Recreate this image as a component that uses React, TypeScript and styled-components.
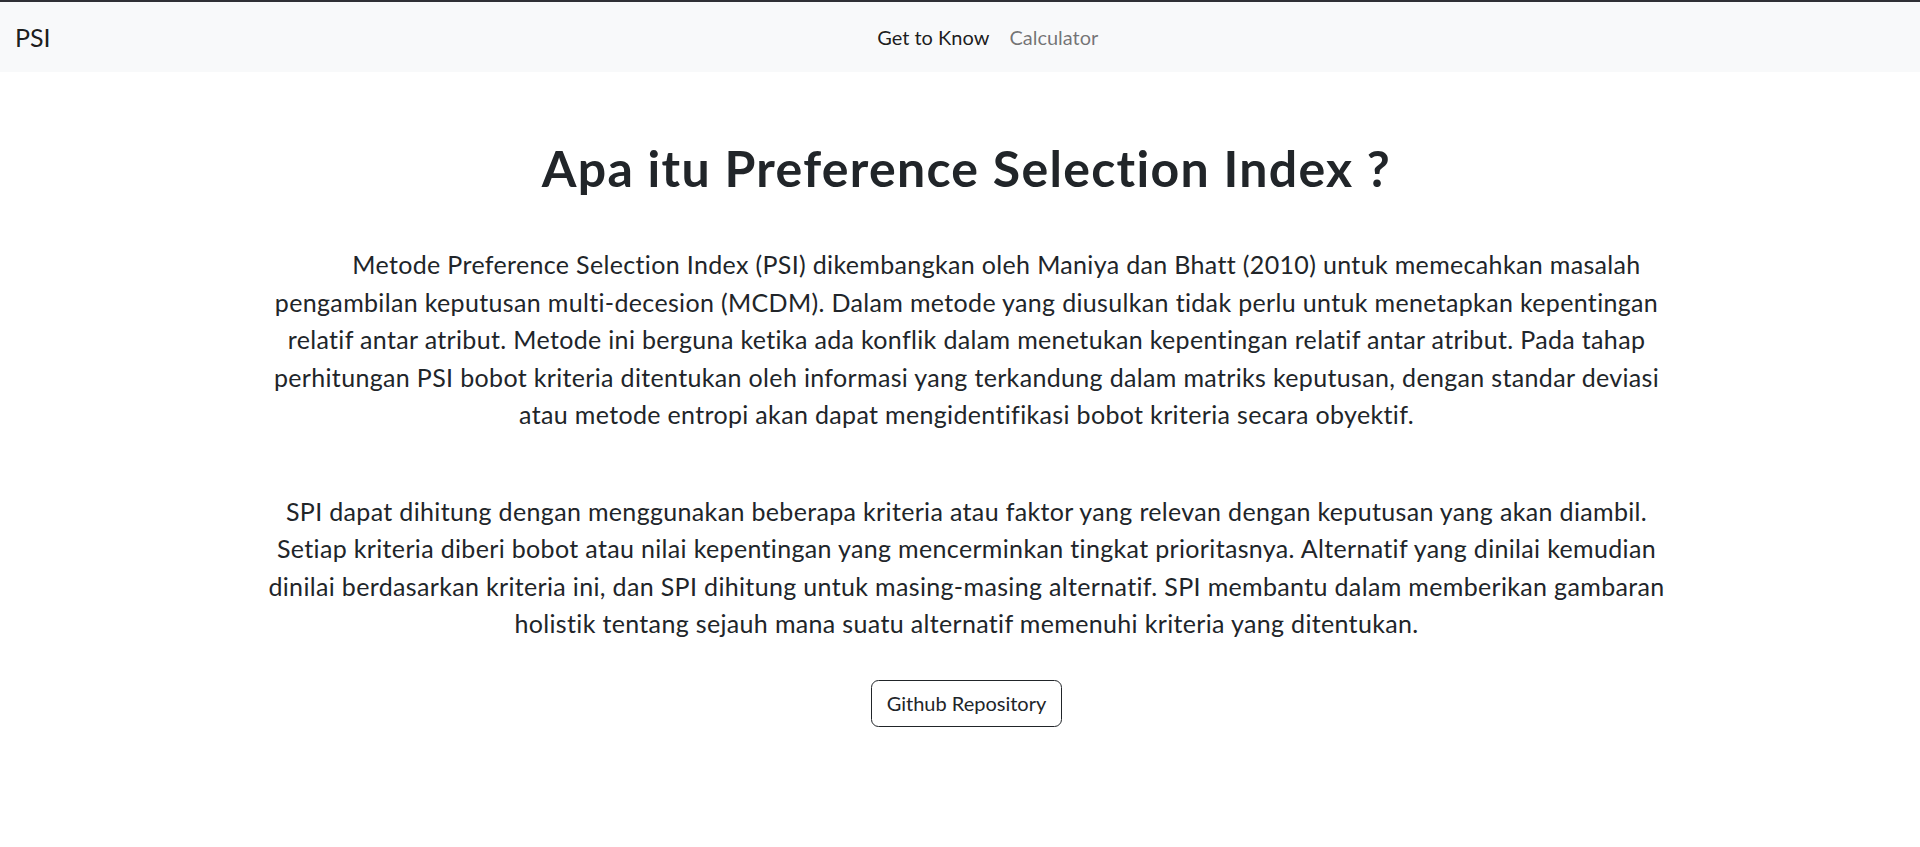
import styled, { createGlobalStyle } from "styled-components";

const GlobalStyle = createGlobalStyle`
  body {
    margin: 0;
    font-family: Lato, "Open Sans", sans-serif;
    font-variant-ligatures: none;
    color: #212529;
    background: #ffffff;
  }
`;

const NavBar = styled.nav`
  display: flex;
  align-items: center;
  height: 70px;
  padding: 0 15px;
  background: #f8f9fa;
  border-top: 2px solid #2f3035;
`;

const Brand = styled.a`
  font-size: 25px;
  color: rgba(0, 0, 0, 0.9);
  text-decoration: none;
  margin-right: 20px;
`;

const NavList = styled.ul`
  display: flex;
  list-style: none;
  margin: 0 auto;
  padding: 0;
`;

const NavLink = styled.a<{ $active?: boolean }>`
  display: block;
  padding: 10px 10px;
  font-size: 20px;
  text-decoration: none;
  color: ${(p) => (p.$active ? "rgba(0, 0, 0, 0.9)" : "rgba(0, 0, 0, 0.55)")};
`;

const Main = styled.main`
  display: flex;
  flex-direction: column;
  align-items: center;
  padding: 66px 0 0 13px;
`;

const Title = styled.h1`
  margin: 0 0 48px;
  font-size: 50px;
  line-height: 60px;
  font-weight: 700;
  letter-spacing: 1.3px;
  text-align: center;
`;

const Paragraph = styled.p<{ $indent?: boolean }>`
  max-width: 1410px;
  margin: 0 0 ${(p) => (p.$indent ? "59px" : "37px")};
  font-size: 25px;
  line-height: 37.5px;
  letter-spacing: 0.34px;
  text-align: center;
  text-indent: ${(p) => (p.$indent ? "60px" : "0")};
`;

const OutlineButton = styled.a`
  display: inline-block;
  padding: 7.5px 15px;
  font-size: 20px;
  line-height: 30px;
  color: #212529;
  text-decoration: none;
  border: 1px solid #212529;
  border-radius: 7.5px;
`;

export default function App() {
  return (
    <>
      <GlobalStyle />
      <NavBar>
        <Brand href="#">PSI</Brand>
        <NavList>
          <li>
            <NavLink href="#" $active>
              Get to Know
            </NavLink>
          </li>
          <li>
            <NavLink href="#">Calculator</NavLink>
          </li>
        </NavList>
      </NavBar>
      <Main>
        <Title>Apa itu Preference Selection Index ?</Title>
        <Paragraph $indent>
          Metode Preference Selection Index (PSI) dikembangkan oleh Maniya dan
          Bhatt (2010) untuk memecahkan masalah pengambilan keputusan
          multi-decesion (MCDM). Dalam metode yang diusulkan tidak perlu untuk
          menetapkan kepentingan relatif antar atribut. Metode ini berguna
          ketika ada konflik dalam menetukan kepentingan relatif antar atribut.
          Pada tahap perhitungan PSI bobot kriteria ditentukan oleh informasi
          yang terkandung dalam matriks keputusan, dengan standar deviasi atau
          metode entropi akan dapat mengidentifikasi bobot kriteria secara
          obyektif.
        </Paragraph>
        <Paragraph>
          SPI dapat dihitung dengan menggunakan beberapa kriteria atau faktor
          yang relevan dengan keputusan yang akan diambil. Setiap kriteria
          diberi bobot atau nilai kepentingan yang mencerminkan tingkat
          prioritasnya. Alternatif yang dinilai kemudian dinilai berdasarkan
          kriteria ini, dan SPI dihitung untuk masing-masing alternatif. SPI
          membantu dalam memberikan gambaran holistik tentang sejauh mana suatu
          alternatif memenuhi kriteria yang ditentukan.
        </Paragraph>
        <OutlineButton href="#">Github Repository</OutlineButton>
      </Main>
    </>
  );
}
